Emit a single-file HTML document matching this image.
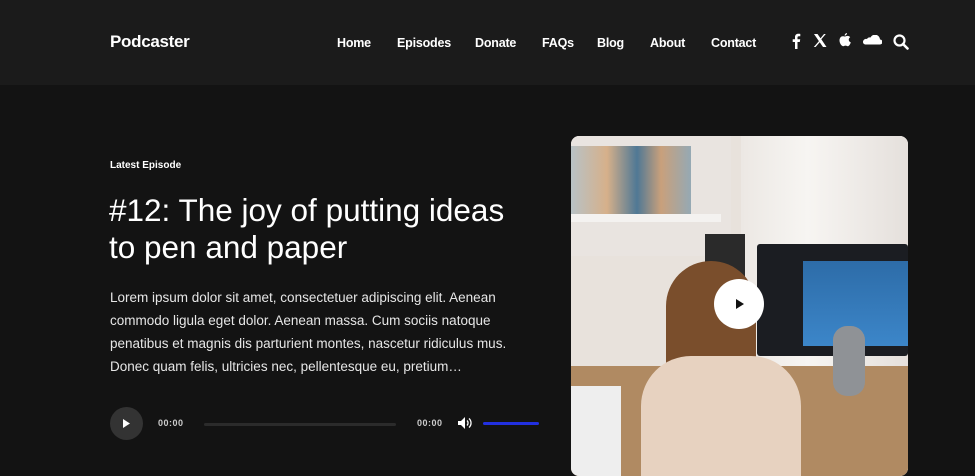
<!DOCTYPE html>
<html><head><style>
*{margin:0;padding:0;box-sizing:border-box}
body{width:975px;height:463px;overflow:hidden;background:#131313;font-family:"Liberation Sans",sans-serif;color:#fff;position:relative}
.hdr{position:absolute;left:0;top:0;width:975px;height:85px;background:#1b1b1b}
.logo{position:absolute;left:110px;top:32px;font-size:17px;font-weight:bold;letter-spacing:-0.3px}
.nav{position:absolute;top:36px;font-size:12.5px;font-weight:bold;letter-spacing:-0.2px}
.ic{position:absolute;top:33px}
.lat{position:absolute;left:110px;top:160px;font-size:10px;font-weight:bold}
h1{position:absolute;left:109px;top:192px;font-size:31.5px;line-height:37px;font-weight:normal;width:440px;letter-spacing:0;white-space:nowrap}
p{position:absolute;left:110px;top:286px;font-size:13.5px;line-height:23px;width:430px;color:#e6e6e6}
.t{position:absolute;top:418px;font-size:9px;font-weight:bold;color:#ccc;letter-spacing:0.5px}
.img{position:absolute;left:571px;top:136px;width:337px;height:340px;border-radius:8px;overflow:hidden;background:#e8e2dc}
</style></head><body>
<div class="hdr"></div>
<div class="logo">Podcaster</div>
<div class="nav" style="left:337px">Home</div>
<div class="nav" style="left:397px">Episodes</div>
<div class="nav" style="left:475px">Donate</div>
<div class="nav" style="left:542px">FAQs</div>
<div class="nav" style="left:597px">Blog</div>
<div class="nav" style="left:650px">About</div>
<div class="nav" style="left:711px">Contact</div>
<svg class="ic" style="left:791px" width="10" height="16" viewBox="0 0 10 16"><path d="M6.5 16V9h2.3l.4-2.7H6.5V4.6c0-.8.3-1.3 1.4-1.3h1.4V.9C9 .8 8.2.7 7.3.7 5.3.7 4 1.9 4 4.1v2.2H1.7V9H4v7z" fill="#fff"/></svg>
<svg class="ic" style="left:813px;top:34px" width="14" height="13" viewBox="0 0 14 13"><path d="M1 0h3.5l3 4.2L11 0h1.8L8.3 5.3 13.5 13H10L6.7 8.3 2.6 13H.8l5.1-5.9z" fill="#fff"/></svg>
<svg class="ic" style="left:839px;top:33px" width="12" height="14" viewBox="0 0 12 14"><path d="M8 0c0 1.4-1 2.6-2.3 2.6C5.6 1.3 6.7.1 8 0zM6 3.5c.8 0 1.6-.6 2.6-.6 1 0 2 .5 2.6 1.4-2.2 1.2-1.8 4.3.6 5.1-.5 1.5-1.6 3.8-2.9 3.8-1 0-1.3-.6-2.4-.6s-1.5.6-2.4.6C2.6 13.2.5 10.3.5 7.4.5 4.8 2.1 3.2 3.7 3.2c1 0 1.6.3 2.3.3z" fill="#fff"/></svg>
<svg class="ic" style="left:862px;top:35px" width="20" height="10" viewBox="0 0 20 10"><path d="M4 9.5h14a2.5 2.5 0 0 0 0-5 5 5 0 0 0-9.5-2c-1-.5-3 0-3.5 1.5C3 3.5 1 5 1 7c0 1.5 1.3 2.5 3 2.5z" fill="#fff"/></svg>
<svg class="ic" style="left:893px;top:34px" width="16" height="16" viewBox="0 0 16 16"><circle cx="6.5" cy="6.5" r="5" fill="none" stroke="#fff" stroke-width="2.2"/><path d="M10 10l4.5 4.5" stroke="#fff" stroke-width="2.6" stroke-linecap="round"/></svg>

<div class="lat">Latest Episode</div>
<h1>#12: The joy of putting ideas<br>to pen and paper</h1>
<p>Lorem ipsum dolor sit amet, consectetuer adipiscing elit. Aenean commodo ligula eget dolor. Aenean massa. Cum sociis natoque penatibus et magnis dis parturient montes, nascetur ridiculus mus. Donec quam felis, ultricies nec, pellentesque eu, pretium…</p>

<div style="position:absolute;left:110px;top:407px;width:33px;height:33px;border-radius:50%;background:#333"></div>
<svg style="position:absolute;left:123px;top:419px" width="8" height="9"><path d="M0 0l7 4.5L0 9z" fill="#fff"/></svg>
<div class="t" style="left:158px">00:00</div>
<div style="position:absolute;left:204px;top:423px;width:192px;height:3px;background:#2b2b2b;border-radius:2px"></div>
<div class="t" style="left:417px">00:00</div>
<svg style="position:absolute;left:458px;top:417px" width="15" height="12" viewBox="0 0 15 12"><path d="M0 4h3l4-4v12L3 8H0z" fill="#fff"/><path d="M9 3.5a3.5 3.5 0 0 1 0 5M11 1.5a6 6 0 0 1 0 9" stroke="#fff" stroke-width="1.3" fill="none"/></svg>
<div style="position:absolute;left:483px;top:422px;width:56px;height:3px;background:#2230e0;border-radius:2px"></div>

<div class="img">
  <div style="position:absolute;left:0;top:0;width:160px;height:120px;background:#e9e4e0"></div>
  <div style="position:absolute;left:170px;top:0;width:167px;height:340px;background:linear-gradient(90deg,#ece8e4,#f7f5f2 40%,#e5e0dc)"></div>
  <div style="position:absolute;left:0;top:10px;width:120px;height:70px;background:linear-gradient(90deg,#b8c2c6,#d6b08a 30%,#4f7895 55%,#c9a07b 75%,#95a9b4)"></div>
  <div style="position:absolute;left:0;top:78px;width:150px;height:8px;background:#f4f2f0"></div>
  <div style="position:absolute;left:134px;top:98px;width:40px;height:50px;background:#2a2a2a"></div>
  <div style="position:absolute;left:186px;top:108px;width:151px;height:112px;background:#1b1d22;border-radius:3px"></div>
  <div style="position:absolute;left:232px;top:125px;width:105px;height:85px;background:linear-gradient(180deg,#2d6ca8,#3c86c9)"></div>
  <div style="position:absolute;left:0;top:230px;width:337px;height:110px;background:#b08a62"></div>
  <div style="position:absolute;left:95px;top:125px;width:90px;height:120px;background:#7a4e2c;border-radius:45px 45px 10px 10px"></div>
  <div style="position:absolute;left:70px;top:220px;width:160px;height:130px;background:#e7d2c0;border-radius:50px 50px 0 0"></div>
  <div style="position:absolute;left:0;top:250px;width:50px;height:90px;background:#eeeeee"></div>
  <div style="position:absolute;left:262px;top:190px;width:32px;height:70px;background:#8f9296;border-radius:14px"></div>
  <div style="position:absolute;left:143px;top:143px;width:50px;height:50px;border-radius:50%;background:#fff"></div>
  <svg style="position:absolute;left:165px;top:163px" width="9" height="10"><path d="M0 0l8 5-8 5z" fill="#111"/></svg>
</div>
</body></html>
